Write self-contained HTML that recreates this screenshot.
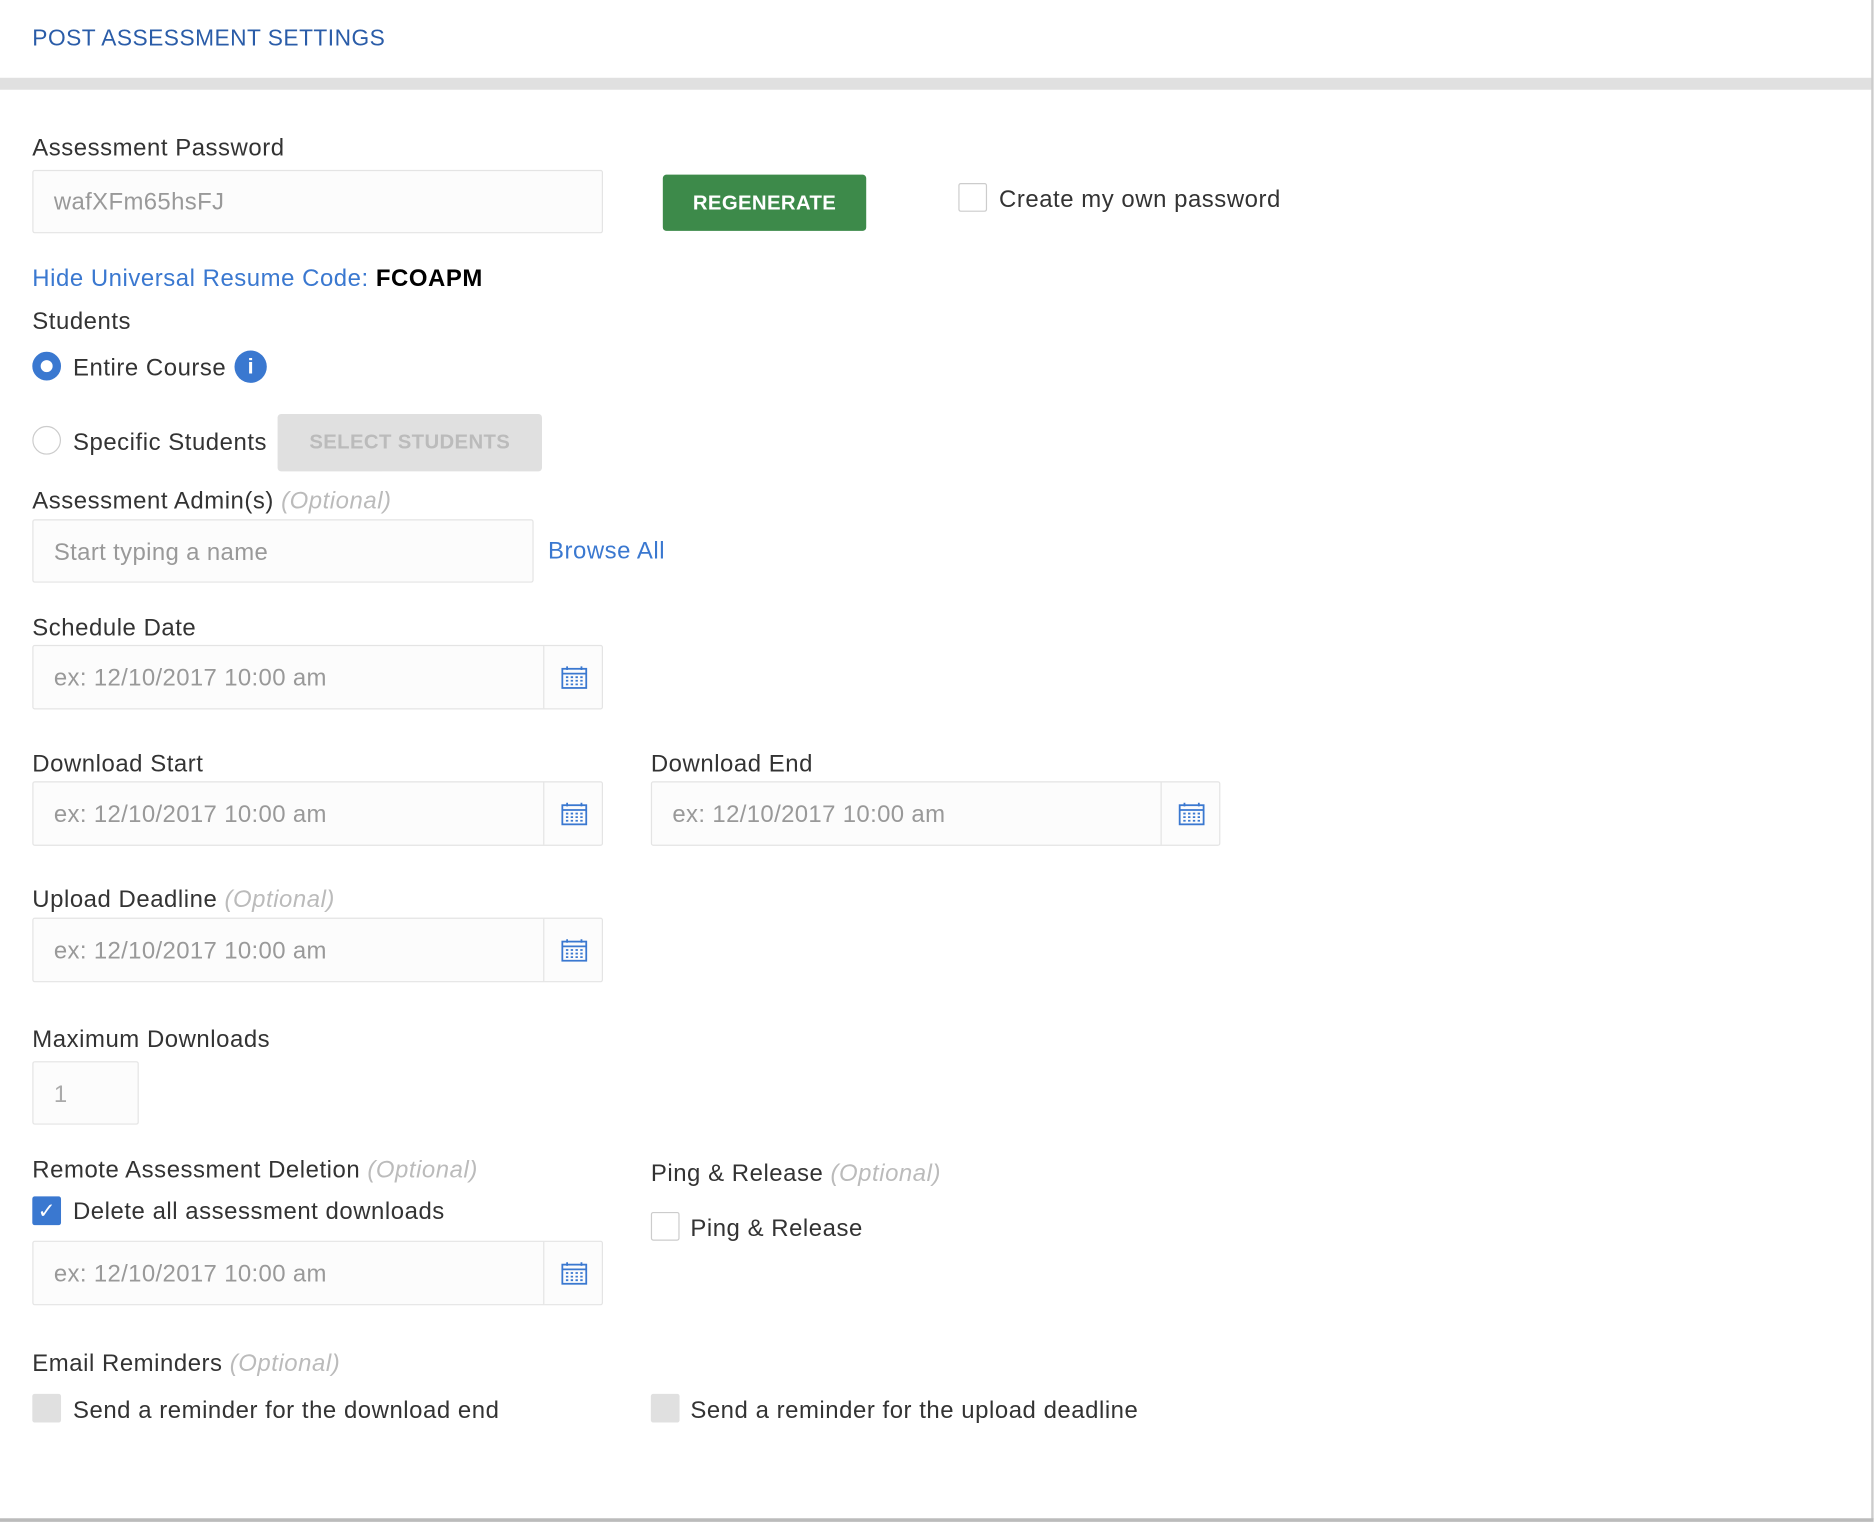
<!DOCTYPE html>
<html><head><meta charset="utf-8">
<style>
html,body{margin:0;padding:0;background:#fff;overflow:hidden}
body{width:1876px;height:1526px;position:relative}
#w{position:absolute;left:0;top:0;width:1568px;height:1275px;transform:scale(1.19643);transform-origin:0 0;font-family:"Liberation Sans",sans-serif;color:#333}
.a{position:absolute;white-space:nowrap}
.l{font-size:20px;line-height:24px;color:#333;letter-spacing:0.45px;margin-top:2px}
.o{font-style:italic;color:#bbb}
.in{position:absolute;background:#fcfcfc;border:1px solid #e4e4e4;box-sizing:border-box;border-radius:2px;font-size:20px;color:#999;line-height:54px;padding-left:17px;letter-spacing:0.3px}
.cal{position:absolute;top:0;right:0;width:49px;height:100%;border-left:1px solid #e4e4e4;box-sizing:border-box}
.cal svg{position:absolute;left:14px;top:16px}
.cb{position:absolute;width:24px;height:24px;box-sizing:border-box;border:1px solid #ccc;border-radius:2px;background:#fff}
.blue{color:#3a78d0}
</style></head><body><div id="w">
<div class="a" style="left:27px;top:21px;font-size:19px;color:#2a5ca8;line-height:24px;letter-spacing:0.4px">POST ASSESSMENT SETTINGS</div>
<div class="a" style="left:0;top:65px;width:1565px;height:10px;background:#e0e0e0"></div>
<div class="a" style="left:1564px;top:0;width:2px;height:1270px;background:#ccc"></div>
<div class="a" style="left:0;top:1269px;width:1566px;height:3px;background:#bbb"></div>

<div class="a l" style="left:27px;top:110px">Assessment Password</div>
<div class="in" style="left:27px;top:142px;width:477px;height:53px;line-height:52px">wafXFm65hsFJ</div>
<div class="a" style="left:554px;top:146px;width:170px;height:47px;background:#3d8a4a;border-radius:3px;color:#fff;font-weight:bold;font-size:17px;line-height:47px;text-align:center;letter-spacing:0.3px">REGENERATE</div>
<div class="cb" style="left:801px;top:153px"></div>
<div class="a l" style="left:835px;top:153px">Create my own password</div>

<div class="a l" style="left:27px;top:219px"><span class="blue">Hide Universal Resume Code:</span> <span style="color:#000;font-weight:bold">FCOAPM</span></div>
<div class="a l" style="left:27px;top:255px">Students</div>
<div class="a" style="left:27px;top:294px;width:24px;height:24px;border-radius:50%;box-sizing:border-box;border:7px solid #3a78d0;background:#fff"></div>
<div class="a l" style="left:61px;top:294px">Entire Course</div>
<div class="a" style="left:196px;top:293px;width:27px;height:27px;border-radius:50%;background:#3a78d0;color:#fff;font-weight:bold;font-size:18px;line-height:27px;text-align:center">i</div>
<div class="a" style="left:27px;top:356px;width:24px;height:24px;border-radius:50%;box-sizing:border-box;border:1px solid #ccc;background:#fff"></div>
<div class="a l" style="left:61px;top:356px">Specific Students</div>
<div class="a" style="left:232px;top:346px;width:221px;height:48px;background:#e0e0e0;border-radius:3px;color:#bbb;font-weight:bold;font-size:17px;line-height:48px;text-align:center;letter-spacing:0.3px">SELECT STUDENTS</div>

<div class="a l" style="left:27px;top:405px">Assessment Admin(s) <span class="o">(Optional)</span></div>
<div class="in" style="left:27px;top:434px;width:419px;height:53px">Start typing a name</div>
<div class="a l blue" style="left:458px;top:447px">Browse All</div>

<div class="a l" style="left:27px;top:511px">Schedule Date</div>
<div class="in" style="left:27px;top:539px;width:477px;height:54px">ex: 12/10/2017 10:00 am<div class="cal"><svg width="22" height="20" viewBox="0 0 22 20"><rect x="1" y="3" width="20" height="16" fill="none" stroke="#3a78d0" stroke-width="1.5"/><line x1="1" y1="7" x2="21" y2="7" stroke="#3a78d0" stroke-width="1.5"/><line x1="5" y1="1" x2="5" y2="4" stroke="#3a78d0" stroke-width="1.5"/><line x1="17" y1="1" x2="17" y2="4" stroke="#3a78d0" stroke-width="1.5"/><path d="M4 10h2M8 10h2M12 10h2M16 10h2M4 13h2M8 13h2M12 13h2M16 13h2M4 16h2M8 16h2M12 16h2M16 16h2" stroke="#3a78d0" stroke-width="1.5"/></svg></div></div>

<div class="a l" style="left:27px;top:625px">Download Start</div>
<div class="in" style="left:27px;top:653px;width:477px;height:54px">ex: 12/10/2017 10:00 am<div class="cal"><svg width="22" height="20" viewBox="0 0 22 20"><rect x="1" y="3" width="20" height="16" fill="none" stroke="#3a78d0" stroke-width="1.5"/><line x1="1" y1="7" x2="21" y2="7" stroke="#3a78d0" stroke-width="1.5"/><line x1="5" y1="1" x2="5" y2="4" stroke="#3a78d0" stroke-width="1.5"/><line x1="17" y1="1" x2="17" y2="4" stroke="#3a78d0" stroke-width="1.5"/><path d="M4 10h2M8 10h2M12 10h2M16 10h2M4 13h2M8 13h2M12 13h2M16 13h2M4 16h2M8 16h2M12 16h2M16 16h2" stroke="#3a78d0" stroke-width="1.5"/></svg></div></div>
<div class="a l" style="left:544px;top:625px">Download End</div>
<div class="in" style="left:544px;top:653px;width:476px;height:54px">ex: 12/10/2017 10:00 am<div class="cal"><svg width="22" height="20" viewBox="0 0 22 20"><rect x="1" y="3" width="20" height="16" fill="none" stroke="#3a78d0" stroke-width="1.5"/><line x1="1" y1="7" x2="21" y2="7" stroke="#3a78d0" stroke-width="1.5"/><line x1="5" y1="1" x2="5" y2="4" stroke="#3a78d0" stroke-width="1.5"/><line x1="17" y1="1" x2="17" y2="4" stroke="#3a78d0" stroke-width="1.5"/><path d="M4 10h2M8 10h2M12 10h2M16 10h2M4 13h2M8 13h2M12 13h2M16 13h2M4 16h2M8 16h2M12 16h2M16 16h2" stroke="#3a78d0" stroke-width="1.5"/></svg></div></div>

<div class="a l" style="left:27px;top:738px">Upload Deadline <span class="o">(Optional)</span></div>
<div class="in" style="left:27px;top:767px;width:477px;height:54px">ex: 12/10/2017 10:00 am<div class="cal"><svg width="22" height="20" viewBox="0 0 22 20"><rect x="1" y="3" width="20" height="16" fill="none" stroke="#3a78d0" stroke-width="1.5"/><line x1="1" y1="7" x2="21" y2="7" stroke="#3a78d0" stroke-width="1.5"/><line x1="5" y1="1" x2="5" y2="4" stroke="#3a78d0" stroke-width="1.5"/><line x1="17" y1="1" x2="17" y2="4" stroke="#3a78d0" stroke-width="1.5"/><path d="M4 10h2M8 10h2M12 10h2M16 10h2M4 13h2M8 13h2M12 13h2M16 13h2M4 16h2M8 16h2M12 16h2M16 16h2" stroke="#3a78d0" stroke-width="1.5"/></svg></div></div>

<div class="a l" style="left:27px;top:855px">Maximum Downloads</div>
<div class="in" style="left:27px;top:887px;width:89px;height:53px;color:#aaa">1</div>

<div class="a l" style="left:27px;top:964px">Remote Assessment Deletion <span class="o">(Optional)</span></div>
<div class="a" style="left:27px;top:1000px;width:24px;height:24px;background:#3a78d0;border-radius:2px;color:#fff;font-size:18px;line-height:24px;text-align:center">✓</div>
<div class="a l" style="left:61px;top:999px">Delete all assessment downloads</div>
<div class="in" style="left:27px;top:1037px;width:477px;height:54px">ex: 12/10/2017 10:00 am<div class="cal"><svg width="22" height="20" viewBox="0 0 22 20"><rect x="1" y="3" width="20" height="16" fill="none" stroke="#3a78d0" stroke-width="1.5"/><line x1="1" y1="7" x2="21" y2="7" stroke="#3a78d0" stroke-width="1.5"/><line x1="5" y1="1" x2="5" y2="4" stroke="#3a78d0" stroke-width="1.5"/><line x1="17" y1="1" x2="17" y2="4" stroke="#3a78d0" stroke-width="1.5"/><path d="M4 10h2M8 10h2M12 10h2M16 10h2M4 13h2M8 13h2M12 13h2M16 13h2M4 16h2M8 16h2M12 16h2M16 16h2" stroke="#3a78d0" stroke-width="1.5"/></svg></div></div>
<div class="a l" style="left:544px;top:967px">Ping &amp; Release <span class="o">(Optional)</span></div>
<div class="cb" style="left:544px;top:1013px"></div>
<div class="a l" style="left:577px;top:1013px">Ping &amp; Release</div>

<div class="a l" style="left:27px;top:1126px">Email Reminders <span class="o">(Optional)</span></div>
<div class="a" style="left:27px;top:1165px;width:24px;height:24px;background:#e0e0e0;border-radius:2px"></div>
<div class="a l" style="left:61px;top:1165px">Send a reminder for the download end</div>
<div class="a" style="left:544px;top:1165px;width:24px;height:24px;background:#e0e0e0;border-radius:2px"></div>
<div class="a l" style="left:577px;top:1165px">Send a reminder for the upload deadline</div>
</div></body></html>
